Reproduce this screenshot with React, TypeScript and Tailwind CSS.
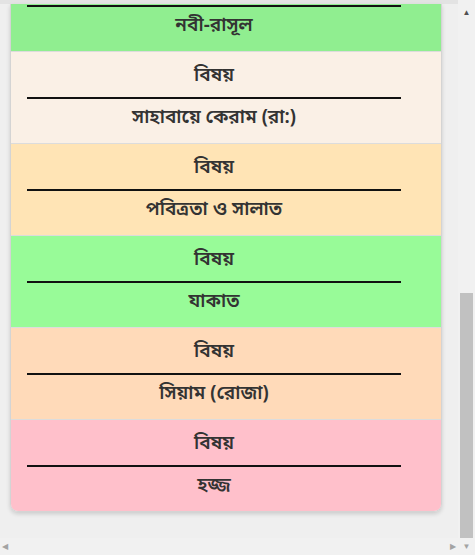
import React from 'react';

const topics = [
  { name: 'সাহাবায়ে কেরাম (রা:)', bg: 'bg-[#faf0e6]' },
  { name: 'পবিত্রতা ও সালাত', bg: 'bg-[#ffe4b5]' },
  { name: 'যাকাত', bg: 'bg-[#98fb98]' },
  { name: 'সিয়াম (রোজা)', bg: 'bg-[#ffdab9]' },
  { name: 'হজ্জ', bg: 'bg-[#ffc0cb]' },
];

const TopicRow = ({ name, bg }: { name: string; bg: string }) => (
  <div className={`${bg} h-[92px] shrink-0 border-t border-[#dcdcdc] pl-[16px] pr-[40px] pt-[11px] text-center`}>
    <div className="text-[19px] font-semibold leading-[28px] text-[#333]">বিষয়</div>
    <div className="mt-[6px] h-[2px] bg-[#111]" />
    <div className="mt-[6px] text-[19px] font-semibold leading-[28px] text-[#333]">{name}</div>
  </div>
);

export default function App() {
  return (
    <div
      className="flex h-[555px] w-[475px] flex-col overflow-hidden bg-[#efefef]"
      style={{ fontFamily: '"Noto Sans Bengali", "Noto Sans", "Liberation Sans", sans-serif' }}
    >
      <div className="flex min-h-0 flex-1">
        <div className="flex min-w-0 flex-1 flex-col">
          <div className="h-[4px] shrink-0 bg-[#e3e3e3]" />
          <div className="flex min-h-0 flex-1 flex-col pb-[26px] pl-[10px] pr-[16px]">
            <div className="shrink-0 overflow-hidden rounded-b-[8px] border-x border-b border-[#d4d4d4] shadow-[0_2px_4px_rgba(0,0,0,0.15)]">
              {/* tail of the previous topic, scrolled past */}
              <div className="h-[47px] bg-[#90ee90] pl-[16px] pr-[40px] pt-[1px] text-center">
                <div className="h-[2px] bg-[#111]" />
                <div className="mt-[6px] text-[19px] font-semibold leading-[28px] text-[#333]">নবী-রাসূল</div>
              </div>
              {topics.map((t) => (
                <TopicRow key={t.name} name={t.name} bg={t.bg} />
              ))}
            </div>
          </div>
          {/* horizontal scrollbar */}
          <div className="flex h-[17px] shrink-0 items-center justify-between bg-[#f1f1f1] px-[2px] text-[8px] text-[#a3a3a3]">
            <span>◀</span>
            <span>▶</span>
          </div>
        </div>
        {/* vertical scrollbar */}
        <div className="flex w-[17px] shrink-0 flex-col bg-[#f1f1f1]">
          <div className="flex h-[21px] items-center justify-center pt-[4px] text-[8px] text-[#505050]">▲</div>
          <div className="flex flex-1 flex-col justify-end px-[2px]">
            <div className="h-[245px] bg-[#c1c1c1]" />
          </div>
          <div className="flex h-[17px] items-center justify-center text-[8px] text-[#a3a3a3]">▼</div>
        </div>
      </div>
    </div>
  );
}
